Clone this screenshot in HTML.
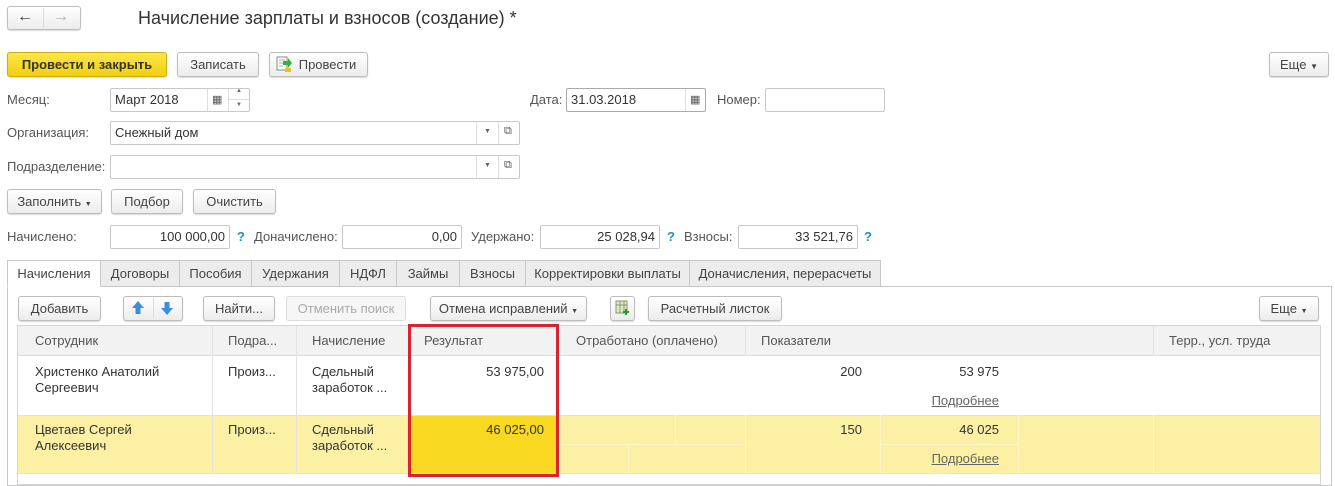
<!DOCTYPE html><html><head><meta charset="utf-8"><style>
*{box-sizing:border-box;margin:0;padding:0}
body{width:1335px;height:481px;background:#fff;font-family:"Liberation Sans",Arial,sans-serif;font-size:13px;color:#333;position:relative;overflow:hidden}
.a{position:absolute;white-space:nowrap}
.btn{position:absolute;border:1px solid #bdbdbd;border-radius:3px;background:linear-gradient(#fff,#ececec);box-shadow:0 1px 1px rgba(0,0,0,.15);text-align:center;color:#444;height:25px;line-height:23px}
.inp{position:absolute;border:1px solid #c8c8c8;border-radius:2px;background:#fff;height:24px;line-height:22px;padding:0 4px;color:#333}
.lbl{position:absolute;color:#555;line-height:24px}
.q{position:absolute;color:#1e8fc8;font-weight:bold;line-height:24px}
.tab{position:absolute;top:260px;height:27px;border:1px solid #c8c8c8;border-left:none;background:#ececec;line-height:25px;text-align:center;color:#444}
.cell{position:absolute;line-height:16px;color:#333}
.vl{position:absolute;width:1px;background:#e2e2e2}
.hl{position:absolute;height:1px;background:#e2e2e2}
</style></head><body>
<div class="btn" style="left:7px;top:6px;width:74px;height:24px"></div>
<div class="a" style="left:43px;top:8px;width:1px;height:20px;background:#ddd"></div>
<div class="a" style="left:17px;top:8px;font-size:16px;color:#333;font-weight:bold">&#8592;</div>
<div class="a" style="left:53px;top:8px;font-size:16px;color:#aaa;font-weight:bold">&#8594;</div>
<div class="a" style="left:138px;top:8px;font-size:18px;color:#333">Начисление зарплаты и взносов (создание) *</div>

<div class="btn" style="left:7px;top:52px;width:160px;background:linear-gradient(#fbe74a,#f2cf0e);border-color:#d0ae0a;font-weight:bold;color:#333">Провести и закрыть</div>
<div class="btn" style="left:177px;top:52px;width:82px">Записать</div>
<div class="btn" style="left:269px;top:52px;width:99px;padding-left:18px">Провести</div>
<svg class="a" style="left:276px;top:56px" width="16" height="17"><rect x="1" y="1" width="10" height="13" fill="#fff" stroke="#888"/><path d="M3 4h6M3 7h6M3 10h4" stroke="#aaa"/><path d="M7 5h5v-3l4 5-4 5v-3h-5z" fill="#3ab03a"/><rect x="9" y="12" width="6" height="4" fill="#e8c020"/></svg>
<div class="btn" style="left:1269px;top:52px;width:60px">Еще <span style="font-size:8px">▼</span></div>

<div class="lbl" style="left:7px;top:88px">Месяц:</div>
<div class="inp" style="left:110px;top:88px;width:140px">Март 2018</div>
<div class="a" style="left:207px;top:89px;width:1px;height:22px;background:#ddd"></div>
<div class="a" style="left:228px;top:89px;width:1px;height:22px;background:#ddd"></div>
<div class="a" style="left:229px;top:99px;width:20px;height:1px;background:#ddd"></div>
<div class="a" style="left:212px;top:93px;font-size:11px;color:#555">▦</div>
<div class="a" style="left:236px;top:88px;font-size:6px;color:#666">▲</div>
<div class="a" style="left:236px;top:102px;font-size:6px;color:#666">▼</div>

<div class="lbl" style="left:530px;top:88px">Дата:</div>
<div class="inp" style="left:566px;top:88px;width:140px;border-color:#aaa">31.03.2018</div>
<div class="a" style="left:685px;top:89px;width:1px;height:22px;background:#ddd"></div>
<div class="a" style="left:690px;top:93px;font-size:11px;color:#555">▦</div>
<div class="lbl" style="left:717px;top:88px">Номер:</div>
<div class="inp" style="left:765px;top:88px;width:120px"></div>

<div class="lbl" style="left:7px;top:121px">Организация:</div>
<div class="inp" style="left:110px;top:121px;width:410px">Снежный дом</div>
<div class="a" style="left:476px;top:122px;width:1px;height:22px;background:#ddd"></div>
<div class="a" style="left:498px;top:122px;width:1px;height:22px;background:#ddd"></div>
<div class="a" style="left:484px;top:128px;font-size:7px;color:#666">▼</div>
<div class="a" style="left:504px;top:125px;font-size:11px;color:#555">⧉</div>

<div class="lbl" style="left:7px;top:155px">Подразделение:</div>
<div class="inp" style="left:110px;top:155px;width:410px"></div>
<div class="a" style="left:476px;top:156px;width:1px;height:22px;background:#ddd"></div>
<div class="a" style="left:498px;top:156px;width:1px;height:22px;background:#ddd"></div>
<div class="a" style="left:484px;top:162px;font-size:7px;color:#666">▼</div>
<div class="a" style="left:504px;top:159px;font-size:11px;color:#555">⧉</div>

<div class="btn" style="left:7px;top:189px;width:95px">Заполнить <span style="font-size:7px">▼</span></div>
<div class="btn" style="left:111px;top:189px;width:72px">Подбор</div>
<div class="btn" style="left:193px;top:189px;width:83px">Очистить</div>

<div class="lbl" style="left:7px;top:225px">Начислено:</div>
<div class="inp" style="left:110px;top:225px;width:120px;text-align:right">100 000,00</div>
<div class="q" style="left:237px;top:225px">?</div>
<div class="lbl" style="left:254px;top:225px">Доначислено:</div>
<div class="inp" style="left:342px;top:225px;width:120px;text-align:right">0,00</div>
<div class="lbl" style="left:471px;top:225px">Удержано:</div>
<div class="inp" style="left:540px;top:225px;width:120px;text-align:right">25 028,94</div>
<div class="q" style="left:667px;top:225px">?</div>
<div class="lbl" style="left:684px;top:225px">Взносы:</div>
<div class="inp" style="left:738px;top:225px;width:120px;text-align:right">33 521,76</div>
<div class="q" style="left:864px;top:225px">?</div>

<div class="a" style="left:7px;top:286px;width:1325px;height:200px;border:1px solid #c8c8c8"></div>
<div class="tab" style="left:7px;width:94px;border-left:1px solid #c8c8c8;background:#fff;border-bottom-color:#fff">Начисления</div>
<div class="tab" style="left:101px;width:79px">Договоры</div>
<div class="tab" style="left:180px;width:72px">Пособия</div>
<div class="tab" style="left:252px;width:88px">Удержания</div>
<div class="tab" style="left:340px;width:57px">НДФЛ</div>
<div class="tab" style="left:397px;width:63px">Займы</div>
<div class="tab" style="left:460px;width:66px">Взносы</div>
<div class="tab" style="left:526px;width:164px">Корректировки выплаты</div>
<div class="tab" style="left:690px;width:191px">Доначисления, перерасчеты</div>

<div class="btn" style="left:18px;top:296px;width:83px">Добавить</div>
<div class="btn" style="left:123px;top:296px;width:60px"></div>
<div class="a" style="left:153px;top:298px;width:1px;height:20px;background:#ddd"></div>
<svg class="a" style="left:131px;top:300px" width="14" height="16"><path d="M7 1L13 8H9.5V14H4.5V8H1z" fill="#3a8ee0"/></svg>
<svg class="a" style="left:160px;top:300px" width="14" height="16"><path d="M7 15L13 8H9.5V2H4.5V8H1z" fill="#3a8ee0"/></svg>
<div class="btn" style="left:203px;top:296px;width:72px">Найти...</div>
<div class="btn" style="left:286px;top:296px;width:120px;color:#aaa;background:#f6f6f6;box-shadow:none;border-color:#ddd">Отменить поиск</div>
<div class="btn" style="left:430px;top:296px;width:157px">Отмена исправлений <span style="font-size:7px">▼</span></div>
<div class="btn" style="left:610px;top:296px;width:25px"></div>
<svg class="a" style="left:615px;top:300px" width="16" height="16"><rect x="1" y="1" width="11" height="12" fill="#dfe8c8" stroke="#8a9a6a"/><path d="M1 5h11M5 1v12M9 1v12" stroke="#8a9a6a"/><path d="M11 9v6M8 12h6" stroke="#2a9a2a" stroke-width="2"/></svg>
<div class="btn" style="left:648px;top:296px;width:134px">Расчетный листок</div>
<div class="btn" style="left:1259px;top:296px;width:60px">Еще <span style="font-size:7px">▼</span></div>

<div class="a" style="left:17px;top:325px;width:1304px;height:160px;border:1px solid #d5d5d5"></div>
<div class="a" style="left:18px;top:326px;width:1302px;height:30px;background:#f2f2f2;border-bottom:1px solid #ddd"></div>
<div class="a" style="left:18px;top:415px;width:1302px;height:58px;background:#fcf0a4"></div>
<div class="a" style="left:410px;top:415px;width:147px;height:58px;background:#f8d820"></div>
<div class="hl" style="left:18px;top:415px;width:1302px"></div>
<div class="hl" style="left:18px;top:473px;width:1302px"></div>
<div class="vl" style="left:212px;top:326px;height:147px"></div>
<div class="vl" style="left:296px;top:326px;height:147px"></div>
<div class="vl" style="left:745px;top:326px;height:30px"></div>
<div class="vl" style="left:1153px;top:326px;height:30px"></div>
<div class="vl" style="left:745px;top:415px;height:58px;background:#fff6c8"></div>
<div class="vl" style="left:1153px;top:415px;height:58px;background:#fff6c8"></div>
<div class="vl" style="left:675px;top:415px;height:29px;background:#fff6c8"></div>
<div class="vl" style="left:628px;top:444px;height:29px;background:#fff6c8"></div>
<div class="vl" style="left:880px;top:415px;height:58px;background:#fff6c8"></div>
<div class="vl" style="left:1018px;top:415px;height:58px;background:#fff6c8"></div>
<div class="hl" style="left:558px;top:444px;width:187px;background:#fff6c8"></div>
<div class="hl" style="left:880px;top:444px;width:138px;background:#fff6c8"></div>

<div class="cell" style="left:35px;top:333px;color:#555">Сотрудник</div>
<div class="cell" style="left:228px;top:333px;color:#555">Подра...</div>
<div class="cell" style="left:312px;top:333px;color:#555">Начисление</div>
<div class="cell" style="left:424px;top:333px;color:#555">Результат</div>
<div class="cell" style="left:576px;top:333px;color:#555">Отработано (оплачено)</div>
<div class="cell" style="left:761px;top:333px;color:#555">Показатели</div>
<div class="cell" style="left:1169px;top:333px;color:#555">Терр., усл. труда</div>

<div class="cell" style="left:35px;top:364px">Христенко Анатолий<br>Сергеевич</div>
<div class="cell" style="left:228px;top:364px">Произ...</div>
<div class="cell" style="left:312px;top:364px">Сдельный<br>заработок ...</div>
<div class="cell" style="left:420px;top:364px;width:124px;text-align:right">53 975,00</div>
<div class="cell" style="left:800px;top:364px;width:62px;text-align:right">200</div>
<div class="cell" style="left:930px;top:364px;width:69px;text-align:right">53 975</div>
<div class="cell" style="left:930px;top:393px;width:69px;text-align:right;color:#666;text-decoration:underline">Подробнее</div>

<div class="cell" style="left:35px;top:422px">Цветаев Сергей<br>Алексеевич</div>
<div class="cell" style="left:228px;top:422px">Произ...</div>
<div class="cell" style="left:312px;top:422px">Сдельный<br>заработок ...</div>
<div class="cell" style="left:420px;top:422px;width:124px;text-align:right">46 025,00</div>
<div class="cell" style="left:800px;top:422px;width:62px;text-align:right">150</div>
<div class="cell" style="left:930px;top:422px;width:69px;text-align:right">46 025</div>
<div class="cell" style="left:930px;top:451px;width:69px;text-align:right;color:#666;text-decoration:underline">Подробнее</div>

<div class="a" style="left:408px;top:324px;width:151px;height:153px;border:3px solid #d8242e"></div>
</body></html>
